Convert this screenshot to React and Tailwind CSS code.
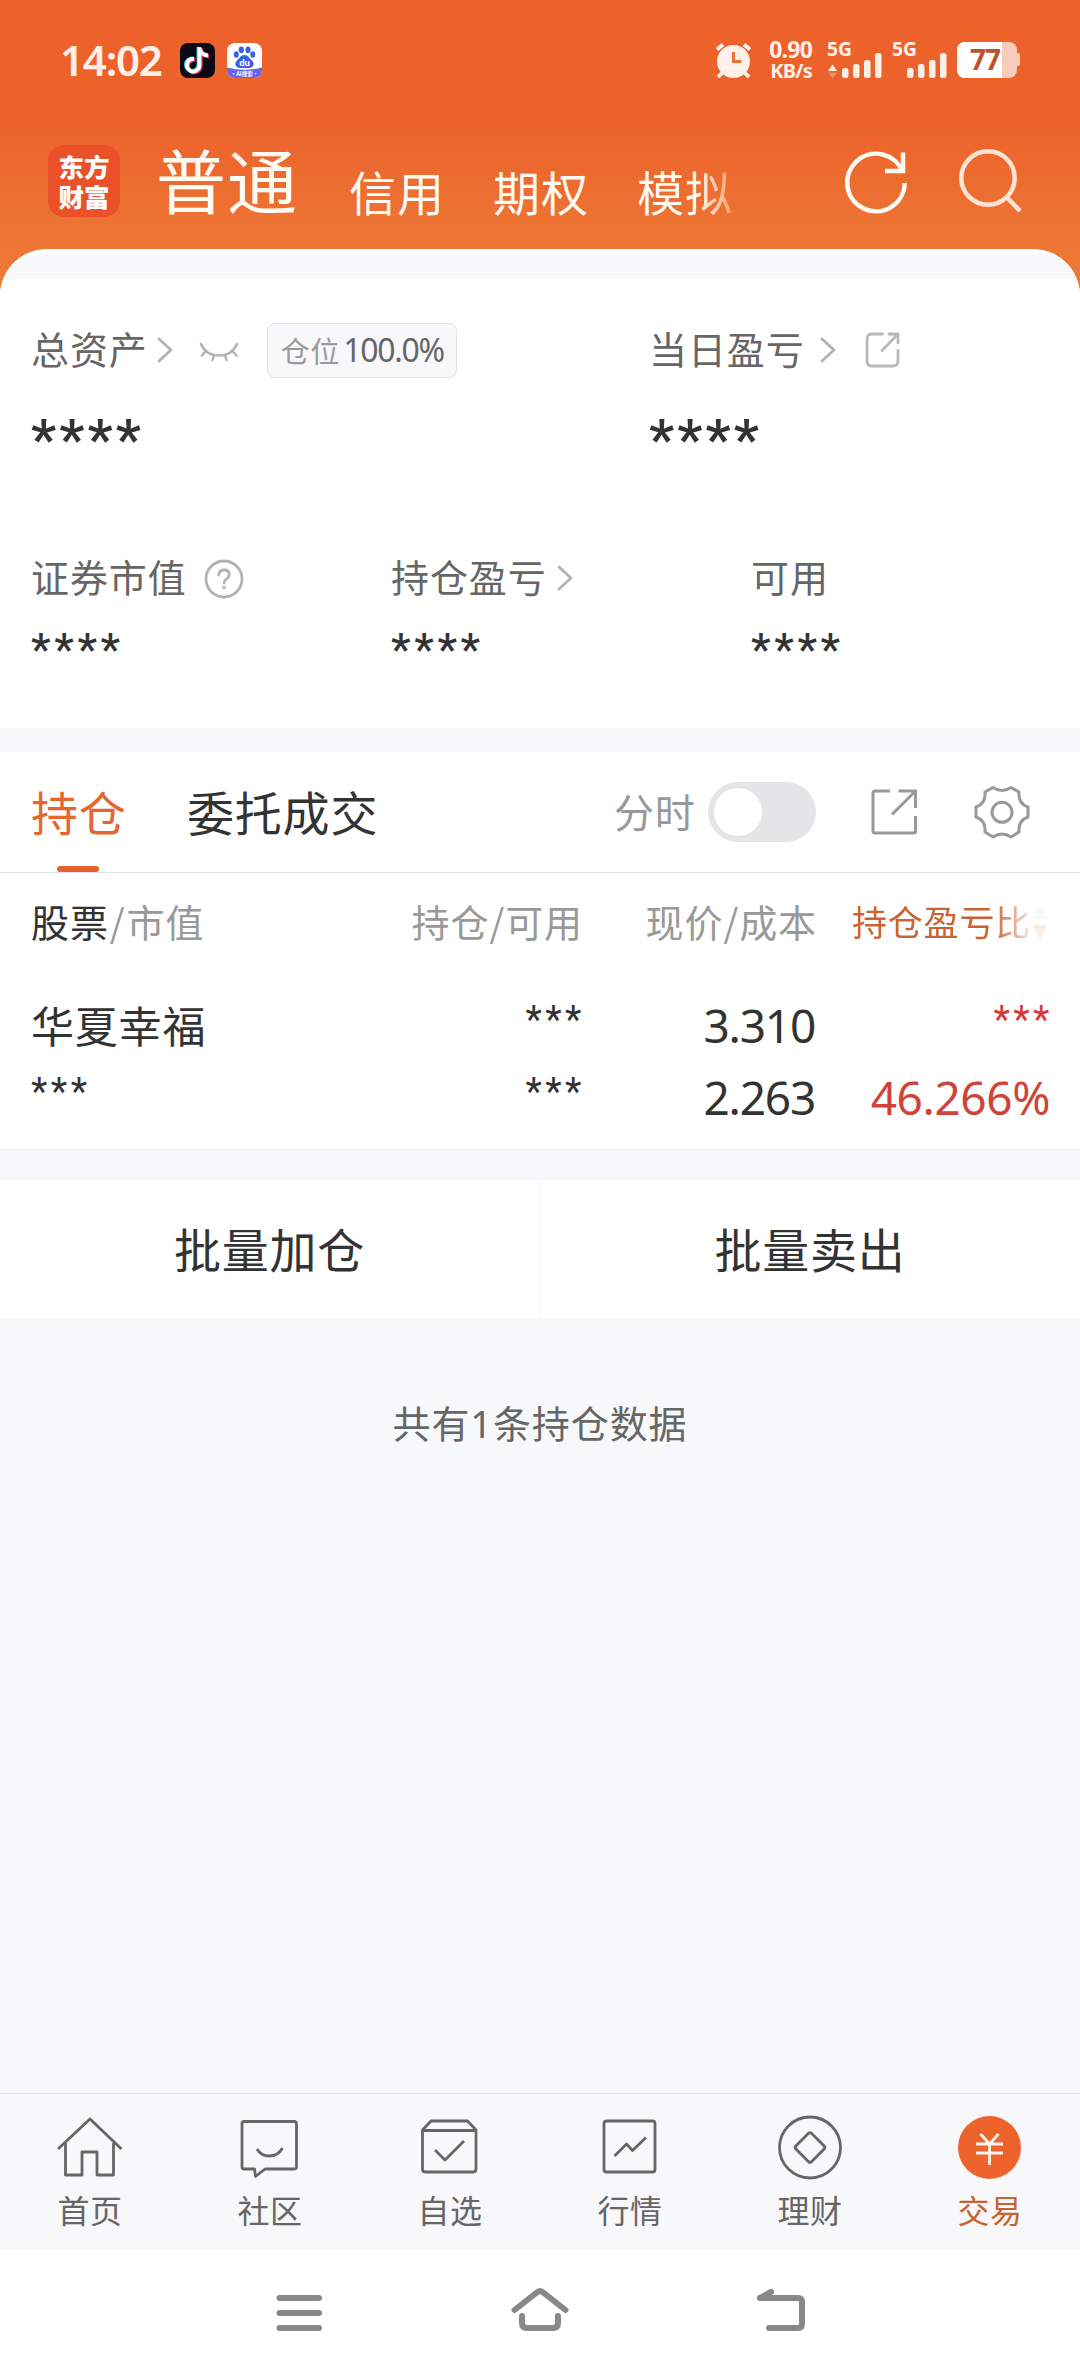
import React from "react";

const CJK = "font-['Noto_Sans_CJK_SC','Noto_Sans',sans-serif]";
const NUM = "font-['Noto_Sans','Noto_Sans_CJK_SC',sans-serif]";
const STAR = "font-['Roboto','Noto_Sans_CJK_SC',sans-serif]";

function Signal({ arrows }) {
  return (
    <svg className="overflow-visible" width="56" height="36" viewBox="0 0 56 36" fill="#fff1ea">
      <text x="0" y="14" fontSize="19" fontWeight="700" fontFamily="Noto Sans, sans-serif" textLength="25" lengthAdjust="spacingAndGlyphs">5G</text>
      {arrows && <path d="M1 29L5.5 22.5L10 29z" />}
      {arrows && <path d="M1 30.5L5.5 36.5L10 30.5z" opacity=".3" />}
      <rect x="15" y="26" width="6.5" height="10" rx="2.5" />
      <rect x="26" y="22" width="6.5" height="14" rx="2.5" />
      <rect x="37" y="18" width="6.5" height="18" rx="2.5" />
      <rect x="48" y="11" width="6.5" height="25" rx="2.5" />
    </svg>
  );
}

function StatusBar() {
  return (
    <div className="flex h-[120px] items-center pl-[60px] pr-[60px]">
      <span className={`${NUM} w-[108px] text-[42px] font-semibold leading-[60px] tracking-[-1.2px] text-[#fff1ea]`}>14:02</span>
      <svg className="ml-[12px]" width="35" height="35" viewBox="0 0 35 35">
        <rect width="35" height="35" rx="8" fill="#0b0a14" />
        <g fill="none" strokeWidth="3.8">
          <path d="M14 16a6.300 6.300 0 1 0 5.500 6.500V4.500c.5 4.500 3.500 7.500 8.500 8" stroke="#2fe6e6" transform="translate(-1 -.6)" />
          <path d="M14 16a6.300 6.300 0 1 0 5.500 6.500V4.500c.5 4.500 3.500 7.500 8.500 8" stroke="#f5315c" transform="translate(1.200 1)" />
          <path d="M14 16a6.300 6.300 0 1 0 5.500 6.500V4.500c.5 4.500 3.500 7.500 8.500 8" stroke="#fff" />
        </g>
      </svg>
      <svg className="ml-[12px] overflow-visible" width="35" height="35" viewBox="0 0 35 35">
        <defs>
          <clipPath id="tile"><rect width="35" height="35" rx="8" /></clipPath>
          <linearGradient id="paw" x1="0" y1="0" x2="1" y2="1">
            <stop offset="0" stopColor="#1673e6" />
            <stop offset="1" stopColor="#5b4de8" />
          </linearGradient>
        </defs>
        <g clipPath="url(#tile)">
          <rect width="35" height="35" fill="#fff" />
          <path d="M0 24.500Q17.500 29 35 24.500V35H0z" fill="#6663ee" />
          <g fill="url(#paw)">
            <ellipse cx="9.300" cy="11.500" rx="2.500" ry="3.300" />
            <ellipse cx="14.300" cy="6.800" rx="2.600" ry="3.400" />
            <ellipse cx="21" cy="6.800" rx="2.600" ry="3.400" />
            <ellipse cx="25.800" cy="11.500" rx="2.500" ry="3.300" />
            <path d="M17.500 12c4 0 5 3.500 7.500 5.500 3.500 3.500 1 7.500-3 7.500h-9c-4 0-6.500-4-3-7.500 2.500-2 3.500-5.500 7.500-5.500z" />
          </g>
        </g>
        <text x="17.500" y="22.500" textAnchor="middle" fontSize="9.500" fontWeight="700" fontFamily="Roboto, sans-serif" fill="#fff">du</text>
        <text x="17.500" y="32.500" textAnchor="middle" fontSize="5.500" fontWeight="700" fontFamily="Noto Sans CJK SC, sans-serif" fill="#fff">·AI搜索·</text>
      </svg>
      <div className="flex-1" />
      <svg width="38" height="36" viewBox="0 0 38 36">
        <circle cx="18.500" cy="19.500" r="16.500" fill="#fff1ea" />
        <path d="M2 7.500l6-5M35 7.500l-6-5M7 31l-4 4M30 31l4 4" stroke="#fff1ea" strokeWidth="3.800" />
        <path d="M18.500 10v9.500h8" fill="none" stroke="#e9703f" strokeWidth="3" />
      </svg>
      <div className="ml-[13px] flex w-[46px] flex-col items-end font-['Noto_Sans',sans-serif] font-bold text-[#fff1ea]">
        <span className="text-[23px] leading-[21px] tracking-[-0.800px]">0.90</span>
        <span className="text-[20px] leading-[21px] tracking-[-0.800px]">KB/s</span>
      </div>
      <div className="ml-[15px] flex gap-[9px]">
        <Signal arrows />
        <Signal />
      </div>
      <svg className="ml-[9px] overflow-visible" width="63" height="36" viewBox="0 0 63 36">
        <defs><clipPath id="bat"><rect width="60" height="36" rx="8" /></clipPath></defs>
        <g clipPath="url(#bat)">
          <rect width="60" height="36" fill="#f9cbbb" />
          <rect width="45" height="36" fill="#fff" />
        </g>
        <path d="M59 11h2q2 0 2 2v9q0 2-2 2h-2z" fill="#f9cbbb" />
        <text x="13" y="28" fontSize="28" fontWeight="700" fontFamily="Noto Sans, sans-serif" fill="#bb522e" textLength="31">77</text>
      </svg>
    </div>
  );
}

function TitleBar() {
  return (
    <div className="flex h-[129px] items-start pl-[48px]">
      <div className="mt-[25px] flex h-[72px] w-[72px] flex-col items-center justify-center rounded-[16px] bg-[#ea5128] text-[25.500px] font-black leading-[30px] text-white">
        <span>东方</span>
        <span>财富</span>
      </div>
      <div className="ml-[36px] w-[191px] pt-[9px] text-[70px] leading-[100px] tracking-[1px] text-[#fffaf2]">普通</div>
      <div className="flex w-[395px] text-[47px] leading-[60px] tracking-[1px] text-[#fffaf2]">
        <span className="mt-[41px] w-[145px] shrink-0 pl-[2px]">信用</span>
        <span className="mt-[41px] w-[145px] shrink-0 pl-[1px]">期权</span>
        <span className="mt-[41px] w-[100px] shrink-0 [mask-image:linear-gradient(90deg,#000_60%,rgba(0,0,0,0.45)_90%)]">模拟</span>
      </div>
      <svg className="ml-[98px] mt-[24px]" width="72" height="76" viewBox="840 144 72 76" fill="none" stroke="#fffaf2" strokeWidth="4.500">
        <path d="M903 172.500A28.800 28.800 0 1 0 904.800 183" />
        <path d="M903 152.500V171H885" />
      </svg>
      <svg className="ml-[41px] mt-[24px]" width="72" height="76" viewBox="952 144 72 76" fill="none" stroke="#fde3d3" strokeWidth="4.500">
        <circle cx="987" cy="178" r="26.700" />
        <path d="M1006 197.500L1019 211" />
      </svg>
    </div>
  );
}

function Chevron({ className }) {
  return (
    <svg className={className} width="16" height="26" viewBox="0 0 16 26" fill="none" stroke="#b3b3b3" strokeWidth="2.800" strokeLinecap="round" strokeLinejoin="round">
      <path d="M2 2L14 13L2 24" />
    </svg>
  );
}

function Label({ children }) {
  return <span className="text-[38px] leading-[54px] tracking-[0.900px] text-[#666]">{children}</span>;
}

function BigMask() {
  return <div className={`${STAR} mt-[35px] text-[56px] font-semibold leading-[60px] tracking-[3.100px] text-[#333]`}>****</div>;
}

function SmallMask() {
  return <div className={`${STAR} mt-[22px] text-[44px] font-medium leading-[50px] tracking-[3.700px] text-[#333]`}>****</div>;
}

function Summary() {
  return (
    <section className="h-[449px] bg-white">
      <div className="flex pl-[31px] pt-[42px]">
        <div className="w-[618px]">
          <div className="flex h-[54px] items-center">
            <Label>总资产</Label>
            <Chevron className="ml-[9px] mt-[4px]" />
            <svg className="ml-[26px] mt-[7px]" width="40" height="20" viewBox="0 0 40 20" fill="none" stroke="#b3b3b3" strokeWidth="2.500" strokeLinecap="round">
              <path d="M2 2Q7 13.500 20 13.500Q33 13.500 38 2M6.500 9L3 13.500M15 13l-1.500 5M26 13l1.500 5M33.500 9l4 4.500" />
            </svg>
            <div className="ml-[28px] mt-[5px] flex h-[55px] w-[190px] items-center rounded-[8px] border border-[#e4e4e6] bg-[#f8f8fb] pl-[13px] text-[29px] leading-[44px]">
              <span className="-mt-[2px] tracking-[0.800px] text-[#999]">仓位</span>
              <span className={`${NUM} -mt-[2px] ml-[3px] text-[32px] tracking-[-1.300px] text-[#666]`}>100.0%</span>
            </div>
          </div>
          <BigMask />
        </div>
        <div>
          <div className="flex h-[54px] items-center">
            <Label>当日盈亏</Label>
            <Chevron className="ml-[15px] mt-[4px]" />
            <svg className="ml-[29px] mt-[4px]" width="35" height="36" viewBox="0 0 35 36" fill="none" stroke="#b8b8b8" strokeWidth="2.800" strokeLinecap="round" strokeLinejoin="round">
              <path d="M17.500 2H7Q2 2 2 7V29Q2 34 7 34H28Q33 34 33 29V18.500M24 2H33V11M33 2L17 18.500" />
            </svg>
          </div>
          <BigMask />
        </div>
      </div>
      <div className="mt-[79px] grid grid-cols-[360px_360px_360px] pl-[31px]">
        <div className="flex h-[54px] items-center">
          <Label>证券市值</Label>
          <svg className="ml-[17px] mt-[5px]" width="40" height="40" viewBox="0 0 40 40" fill="none" stroke="#b3b3b3" strokeWidth="2.800" strokeLinecap="round">
            <circle cx="20" cy="20" r="18" />
            <path d="M14.800 16Q15 11 20 11Q25.200 11 25.200 15.500Q25.200 18 22.500 19.800Q20 21.500 20 24" />
            <circle cx="20" cy="28.500" r=".6" />
          </svg>
        </div>
        <div className="flex h-[54px] items-center">
          <Label>持仓盈亏</Label>
          <Chevron className="ml-[10px] mt-[4px]" />
        </div>
        <div className="flex h-[54px] items-center"><Label>可用</Label></div>
        <SmallMask />
        <SmallMask />
        <SmallMask />
      </div>
    </section>
  );
}

function Tabs() {
  return (
    <div className="flex h-[121px] border-b border-[#e2e2e4] pl-[31px] text-[47px] tracking-[0.800px]">
      <div className="flex w-[156px] flex-col">
        <span className="mt-[23px] leading-[72px] text-[#e5662f]">持仓</span>
        <span className="ml-[26px] mt-[19px] h-[6px] w-[42px] rounded-[3px] bg-[#e5602a]" />
      </div>
      <span className="mt-[23px] w-[427px] leading-[72px] text-[#333]">委托成交</span>
      <span className="mt-[23px] w-[94px] text-[40px] leading-[72px] text-[#999]">分时</span>
      <div className="mt-[30px] flex h-[60px] w-[108px] items-center rounded-full bg-[#e5e5e8] pl-[6px]">
        <div className="h-[48px] w-[48px] rounded-full bg-white" />
      </div>
      <svg className="ml-[52px] mt-[34px]" width="52" height="52" viewBox="868 786 52 52" fill="none" stroke="#999" strokeWidth="3">
        <path d="M890 791H875Q873 791 873 793V831Q873 833 875 833H914Q915.500 833 915.500 831V816M898.500 791H915.500V808M915 791.500L892 814.500" />
      </svg>
      <svg className="ml-[52px] mt-[30px]" width="60" height="60" viewBox="972 782 60 60" fill="none" stroke="#999" strokeWidth="3" strokeLinejoin="round">
        <circle cx="1002" cy="812.300" r="10" />
        <path d="M993 787.500Q1002 793.500 1011 787.500L1019 792Q1018 804 1028 807V817Q1018 820.500 1019 832L1011 837Q1002 831 993 837L985 832Q986 820.500 976 817V807Q986 804 985 792Z" />
      </svg>
    </div>
  );
}

function Mask({ className }) {
  return <span className={`${STAR} -mt-[9px] text-[38px] leading-[60px] tracking-[3.500px] ${className}`}>***</span>;
}

function Holdings() {
  return (
    <div className="h-[277px] border-b border-[#ececee] pl-[31px] text-[#333]">
      <div className="flex h-[95px] items-center text-[38px] leading-[54px] tracking-[0.900px] text-[#999]">
        <span className="w-[300px] shrink-0"><span className="text-[#333]">股票</span><span className="px-[1px]">/</span>市值</span>
        <span className="w-[252px] shrink-0 text-right">持仓/可用</span>
        <span className="w-[234px] shrink-0 text-right">现价/成本</span>
        <div className="ml-[35px] flex shrink-0 items-center [mask-image:linear-gradient(90deg,#000_71%,rgba(0,0,0,0.12)_92%)]">
          <span className="whitespace-nowrap text-[35px] tracking-[0.800px] text-[#c96432]">持仓盈亏比</span>
          <svg className="mt-[3px]" width="18" height="36" viewBox="0 0 18 36">
            <path d="M9 1L17 15H1z" fill="#c8c8cc" />
            <path d="M9 35L17 21H1z" fill="#e5602a" />
          </svg>
        </div>
      </div>
      <div className="mt-[18px] flex h-[72px] items-center pt-[5px]">
        <span className="-mt-[1px] w-[300px] text-[43px] leading-[66px] tracking-[0.800px]">华夏幸福</span>
        <Mask className="w-[254px] text-right" />
        <span className={`${NUM} w-[230px] text-right text-[46px] leading-[66px] tracking-[-1.200px]`}>3.310</span>
        <Mask className="w-[238px] text-right text-[#d83a35]" />
      </div>
      <div className="flex h-[72px] items-center pt-[5px]">
        <Mask className="w-[300px]" />
        <Mask className="w-[254px] text-right" />
        <span className={`${NUM} w-[230px] text-right text-[46px] leading-[66px] tracking-[-1.200px]`}>2.263</span>
        <span className={`${NUM} w-[235px] text-right text-[46px] leading-[66px] tracking-[-0.400px] text-[#cf4339]`}>46.266%</span>
      </div>
    </div>
  );
}

const navIcons = {
  首页: <path d="M22 37L54 7L85.500 37M29.500 31V63H46V40H61V63H77.500V31" />,
  社区: (
    <>
      <path d="M26 12Q26 9.500 28 9.500H78Q80.500 9.500 80.500 12V55Q80.500 57 78 57H49L39.500 64.500L38.500 57H28Q26 57 26 55Z" />
      <path d="M41 37Q45 44 53.500 44Q62 44 66.500 36" />
    </>
  ),
  自选: (
    <>
      <path d="M26.500 18L35 9H71.500L80 18V57Q80 60 77.500 60H29Q26.500 60 26.500 57ZM27 18.500H80" />
      <path d="M39 38L49 48L68 29" />
    </>
  ),
  行情: (
    <>
      <rect x="28" y="9" width="51" height="51" rx="2.500" />
      <path d="M38.500 44L50.500 32L56.500 38.500L70 25.500" />
    </>
  ),
  理财: (
    <>
      <circle cx="54" cy="35.500" r="30.500" />
      <rect x="43" y="24.500" width="22" height="22" rx="2" transform="rotate(45 54 35.500)" />
    </>
  ),
  交易: (
    <>
      <circle cx="53.500" cy="35.500" r="31.500" fill="#ee622b" stroke="none" />
      <path d="M44.500 22L53.500 32L62.500 22M53.500 32V53M40 32H67M40 41H67" stroke="#fff5ee" />
    </>
  ),
};

function BottomNav() {
  return (
    <nav className="grid h-[157px] grid-cols-6 border-t border-[#e3e3e5] bg-[#f8f8fa]">
      {Object.keys(navIcons).map((name) => (
        <div key={name} className="flex flex-col items-center pt-[18px]">
          <svg width="108" height="72" viewBox="0 0 108 72" fill="none" stroke="#666" strokeWidth="2.800" strokeLinejoin="round">
            {navIcons[name]}
          </svg>
          <span className={name === "交易" ? "mt-[1px] text-[32px] leading-[48px] tracking-[0.500px] text-[#c9622f]" : "mt-[1px] text-[32px] leading-[48px] tracking-[0.500px] text-[#666]"}>
            {name}
          </span>
        </div>
      ))}
    </nav>
  );
}

function SystemNav() {
  return (
    <div className="flex h-[126px] items-center justify-center gap-[181px] bg-white">
      <svg width="60" height="60" viewBox="270 2283 60 60" stroke="#888" strokeWidth="6" strokeLinecap="round">
        <path d="M280.500 2298H320M280.500 2313H320M280.500 2328H320" />
      </svg>
      <svg width="60" height="60" viewBox="510 2283 60 60" fill="none" stroke="#888" strokeWidth="6" strokeLinecap="round" strokeLinejoin="round">
        <path d="M514.500 2310L537.500 2292Q540 2290 542.500 2292L565.500 2310M522 2316V2323Q522 2328 527 2328H553Q558 2328 558 2323V2316" />
      </svg>
      <svg width="60" height="60" viewBox="750 2283 60 60" fill="none" stroke="#888" strokeWidth="6" strokeLinecap="round" strokeLinejoin="round">
        <path d="M770 2292L759 2298H797Q801 2298 801 2302V2324Q801 2328 797 2328H768" />
      </svg>
    </div>
  );
}

export default function App() {
  return (
    <div className={`${CJK} flex h-[2376px] w-[1080px] flex-col overflow-hidden bg-[#f7f8fa]`}>
      <header className="bg-[linear-gradient(180deg,#ee622b_0px,#ec622b_120px,#ed7735_249px,#ed7735_300px)]">
        <StatusBar />
        <TitleBar />
        <div className="overflow-hidden rounded-t-[47px] bg-white pt-[6px]">
          <div className="h-[24px] bg-[#f7f8fa]" />
          <Summary />
        </div>
      </header>
      <section className="mt-[24px] bg-white">
        <Tabs />
        <Holdings />
      </section>
      <section className="mt-[30px] grid h-[138px] grid-cols-2 bg-white text-[47px] leading-[135px] tracking-[0.800px] text-[#333]">
        <div className="border-r border-[#f3f3f5] text-center">批量加仓</div>
        <div className="text-center">批量卖出</div>
      </section>
      <p className="mt-[76px] text-center text-[38px] leading-[56px] tracking-[0.900px] text-[#666]">共有<span className={NUM}>1</span>条持仓数据</p>
      <div className="flex-1" />
      <BottomNav />
      <SystemNav />
    </div>
  );
}
